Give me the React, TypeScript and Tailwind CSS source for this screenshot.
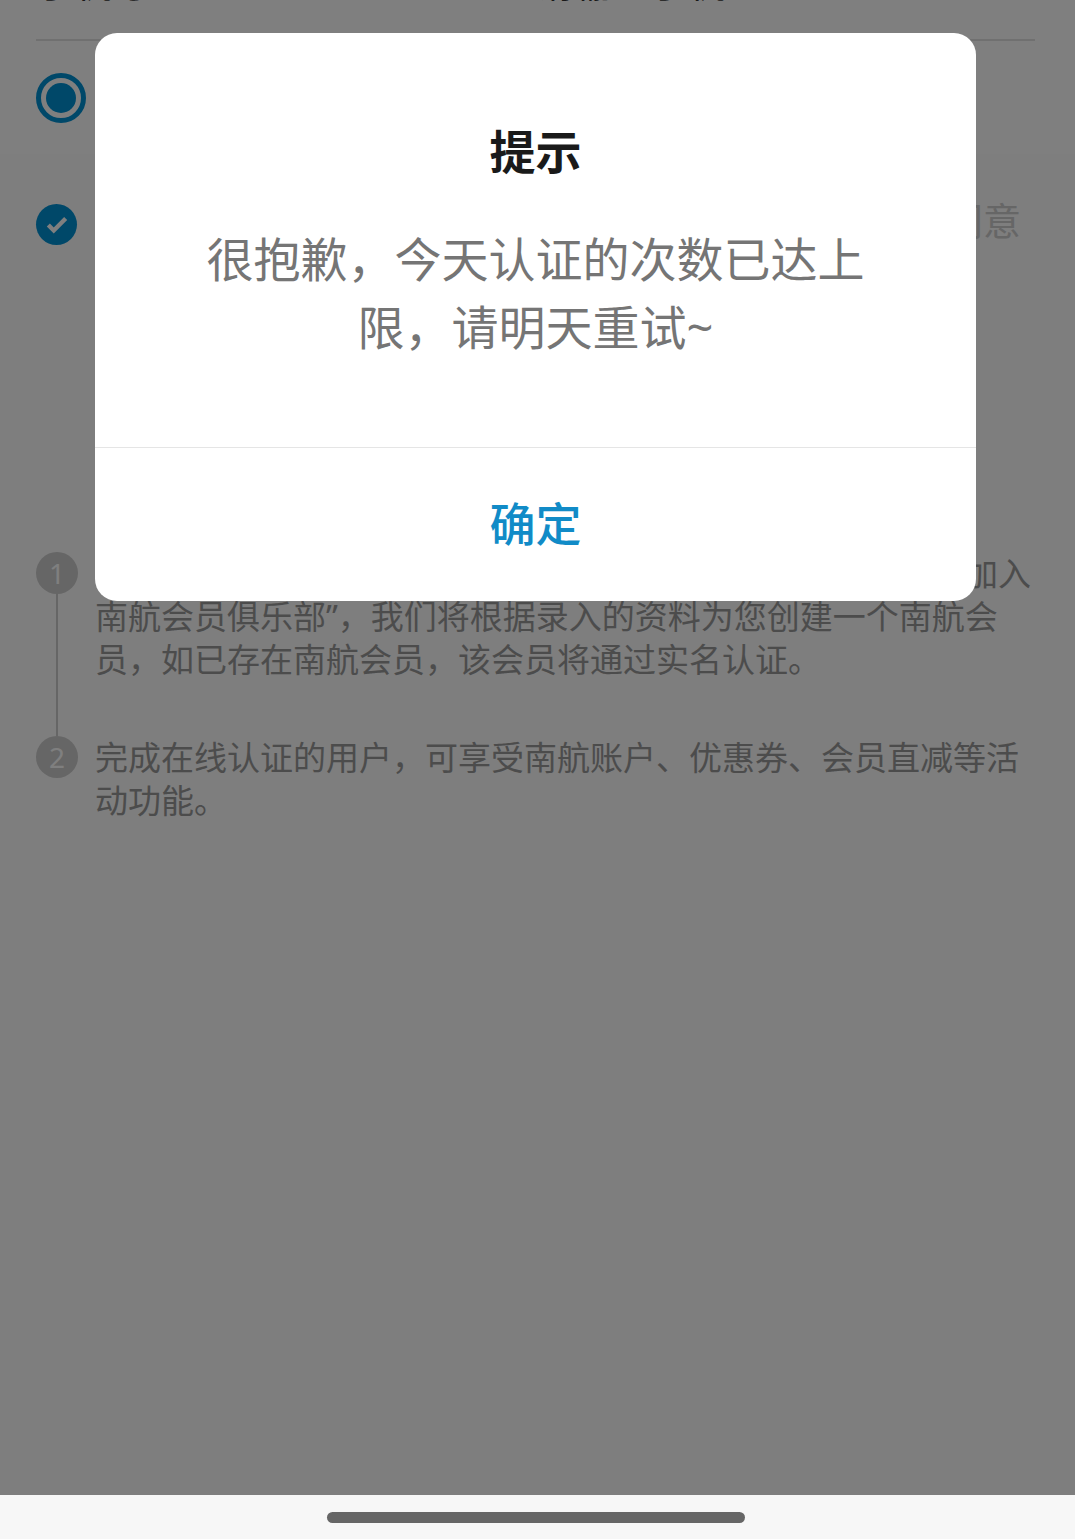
import React from "react";
import { Check } from "lucide-react";

const notes = [
  {
    id: 1,
    lead: "加入",
    text: "南航会员俱乐部”，我们将根据录入的资料为您创建一个南航会员，如已存在南航会员，该会员将通过实名认证。",
  },
  {
    id: 2,
    text: "完成在线认证的用户，可享受南航账户、优惠券、会员直减等活动功能。",
  },
];

function PhoneRow() {
  return (
    <div className="h-[41px] ml-9 mr-10 overflow-hidden flex items-end border-b-2 border-[#e0e0e0] text-[38px] leading-[38px] text-[#333]">
      <span className="w-1/2 pb-[38px]">手机号</span>
      <span className="w-1/2 pb-[38px]">请输入手机</span>
    </div>
  );
}

export default function App() {
  return (
    <div className="relative min-h-screen flex flex-col overflow-hidden bg-[#fcfcfc] font-['Noto_Sans','Noto_Sans_CJK_SC',sans-serif]">
      <main className="flex-1">
        <section className="bg-white">
          <PhoneRow />
          <div className="h-[113px] px-9 flex items-center">
            <input
              type="radio"
              defaultChecked
              aria-label="手机号"
              className="size-[50px] appearance-none rounded-full border-[5px] border-[#0090d3] bg-[#0090d3] bg-clip-content p-[5px]"
            />
          </div>
        </section>

        <label className="flex items-start justify-between pl-9 pr-[54px] pt-[50px] text-[38px] leading-[32px] text-[#ccc]">
          <span className="relative size-[41px]">
            <input type="checkbox" defaultChecked className="block size-full appearance-none rounded-full bg-[#0090d3]" />
            <Check className="absolute inset-0 m-auto size-[26px] text-white" strokeWidth={4} strokeLinecap="butt" strokeLinejoin="miter" />
          </span>
          <span>同意</span>
        </label>

        <ol className="pt-[307px] pl-9 pr-11">
          {notes.map((note, i) => (
            <li key={note.id} className="flex gap-[17px]">
              <div className="flex flex-col items-center">
                <span className="size-[42px] shrink-0 rounded-full bg-[#ccc] text-center text-[28px] leading-[42px] text-white">
                  {note.id}
                </span>
                {i < notes.length - 1 && <span className="w-[2px] flex-1 bg-[#ccc]" />}
              </div>
              <p className={`flex-1 text-[33px] leading-[43px] text-[#999] ${i < notes.length - 1 ? "pb-[55px]" : ""}`}>
                {note.lead && <span className="block text-right">{note.lead}</span>}
                {note.text}
              </p>
            </li>
          ))}
        </ol>
      </main>

      <div className="h-11" />

      {/* Mask + dialog */}
      <div className="absolute inset-x-0 top-0 bottom-11 bg-black/50">
        <div
          role="dialog"
          aria-modal="true"
          aria-labelledby="tip-title"
          className="mt-[33px] ml-[95px] mr-[99px] rounded-[22px] bg-white text-center"
        >
          <div className="px-[100px] pt-[84px] pb-[86px] border-b border-[#e5e5e5]">
            <h2 id="tip-title" className="text-[46px] leading-[68px] font-bold text-[#1a1a1a]">提示</h2>
            <p className="pt-10 text-[47px] leading-[68px] text-[#757575]">很抱歉，今天认证的次数已达上限，请明天重试~</p>
          </div>
          <button type="button" className="block h-[153px] w-full pb-1 text-[46px] leading-[68px] font-medium text-[#118bc7]">
            确定
          </button>
        </div>
      </div>

      {/* Home indicator */}
      <div className="absolute inset-x-0 bottom-0 h-11 pr-1 flex items-center justify-center bg-[#f7f7f7]">
        <span className="h-[11px] w-[418px] rounded-full bg-[#666]" />
      </div>
    </div>
  );
}
